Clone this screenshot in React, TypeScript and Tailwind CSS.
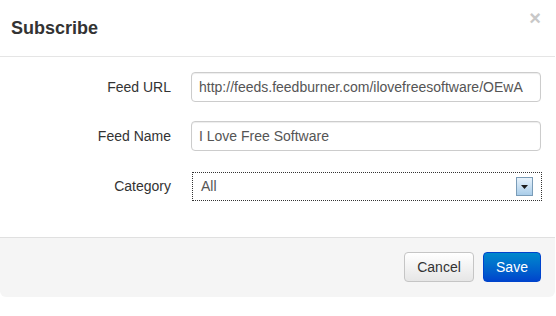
export default function App() {
  return (
    <div className="w-[556px] h-[316px] bg-white font-['Liberation_Sans',Arial,sans-serif] text-[#333] relative">
      <div className="w-[555px] rounded-b-[6px] overflow-hidden">
        <div className="h-[57px] border-b border-[#e5e5e5] flex items-start justify-between pl-[11px] pr-[14px]">
          <h3 className="text-[18px] font-bold leading-[20px] mt-[18px]">Subscribe</h3>
          <span className="text-[20px] font-bold leading-[20px] text-[#c8c8c8] mt-[8px]">×</span>
        </div>
        <div className="pt-[15px] h-[180px] flex flex-col gap-[19px]">
          <Row label="Feed URL" value="http://feeds.feedburner.com/ilovefreesoftware/OEwA" />
          <Row label="Feed Name" value="I Love Free Software" />
          <div className="flex items-center h-[29px] mt-[2px]">
            <label className="w-[171px] text-right text-[14px]">Category</label>
            <div className="ml-[21px] w-[350px] h-[29px] border border-dotted border-[#333] flex items-center justify-between pl-[8px] pr-[8px] text-[14px] text-[#555]">
              <span>All</span>
              <div className="w-[17px] h-[19px] border border-[#7a9cb8] bg-gradient-to-b from-[#e8f2fb] to-[#a9cde9] flex items-center justify-center">
                <svg width="7" height="4" viewBox="0 0 7 4"><path d="M0 0h7L3.5 4z" fill="#1c1c1c" /></svg>
              </div>
            </div>
          </div>
        </div>
        <div className="h-[60px] bg-[#f5f5f5] border-t border-[#e0e0e0] flex items-start justify-end gap-[9px] pr-[14px] pt-[14px]">
          <button className="w-[70px] h-[30px] rounded-[4px] border border-[#c5c5c5] bg-gradient-to-b from-white to-[#e6e6e6] text-[14px] text-[#333]">Cancel</button>
          <button className="w-[58px] h-[30px] rounded-[4px] border border-[#0044cc] bg-gradient-to-b from-[#0088cc] to-[#0044cc] text-[14px] text-white">Save</button>
        </div>
      </div>
    </div>
  );
}

function Row({ label, value }: { label: string; value: string }) {
  return (
    <div className="flex items-center h-[30px]">
      <label className="w-[171px] text-right text-[14px]">{label}</label>
      <div className="ml-[20px] w-[350px] h-[30px] border border-[#cccccc] rounded-[4px] flex items-center px-[7px] text-[14px] text-[#555] shadow-[inset_0_1px_1px_rgba(0,0,0,0.075)] whitespace-nowrap overflow-hidden">
        {value}
      </div>
    </div>
  );
}
